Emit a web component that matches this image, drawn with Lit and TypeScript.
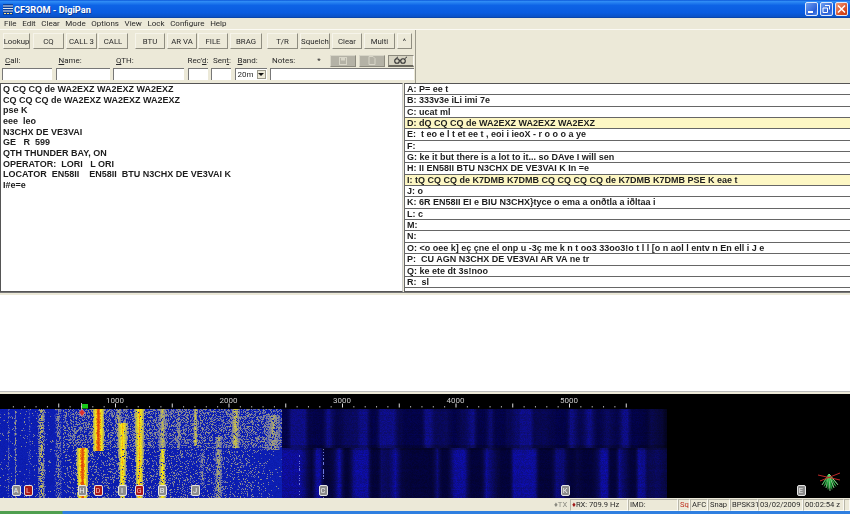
import { LitElement, html, css, svg } from "lit";
import { customElement } from "lit/decorators.js";

const rows: [string, boolean][] = [
  ["A: P= ee t", false],
  ["B: 333v3e iLi imi 7e", false],
  ["C: ucat ml", false],
  ["D: dQ CQ CQ de WA2EXZ WA2EXZ WA2EXZ", true],
  ["E:  t eo e l t et ee t , eoi i ieoX - r o o o a ye", false],
  ["F:", false],
  ["G: ke it but there is a lot to it... so DAve I will sen", false],
  ["H: II EN58II BTU N3CHX DE VE3VAI K In =e", false],
  ["I: tQ CQ CQ de K7DMB K7DMB CQ CQ CQ CQ de K7DMB K7DMB PSE K eae t", true],
  ["J: o", false],
  ["K: 6R EN58II EI e BIU N3CHX}tyce o ema a onðtla a iðltaa i", false],
  ["L: c", false],
  ["M:", false],
  ["N:", false],
  ["O: <o oee k] eç çne el onp u -3ç me k n t oo3 33oo3!o t l l [o n aol l entv n En ell i J e", false],
  ["P:  CU AGN N3CHX DE VE3VAI AR VA ne tr", false],
  ["Q: ke ete dt 3s!noo", false],
  ["R:  sl", false],
];

const leftLines = [
  "Q CQ CQ de WA2EXZ WA2EXZ WA2EXZ",
  "CQ CQ CQ de WA2EXZ WA2EXZ WA2EXZ",
  "pse K",
  "eee  leo",
  "N3CHX DE VE3VAI",
  "GE   R  599",
  "QTH THUNDER BAY, ON",
  "OPERATOR:  LORI   L ORI",
  "LOCATOR  EN58II    EN58II  BTU N3CHX DE VE3VAI K",
  "I#e=e",
];

const buttons: [string, number, number][] = [
  ["Lookup", 27, 3], ["CQ", 31, 3], ["CALL 3", 31, 2], ["CALL", 30, 1],
  ["BTU", 30, 7], ["AR VA", 30, 2], ["FILE", 30, 1], ["BRAG", 32, 2],
  ["T/R", 31, 5], ["Squelch", 30, 2], ["Clear", 30, 2], ["Multi", 31, 2], ["^", 15, 2],
];

const menus = ["File", "Edit", "Clear", "Mode", "Options", "View", "Lock", "Configure", "Help"];

const badges: [string, number, boolean][] = [
  ["A", 16, false], ["L", 28, true], ["H", 82, false], ["D", 98, true], ["I", 122, false],
  ["G", 139, true], ["B", 162, false], ["J", 195, false], ["C", 323, false], ["K", 565, false], ["E", 801, false],
];

const X = (f: number) => 1.5 + f * 0.1135;

function rng(seed: number) {
  return () => {
    seed |= 0; seed = (seed + 0x6d2b79f5) | 0;
    let t = Math.imul(seed ^ (seed >>> 15), 1 | seed);
    t = (t + Math.imul(t ^ (t >>> 7), 61 | t)) ^ t;
    return ((t ^ (t >>> 14)) >>> 0) / 4294967296;
  };
}

type Sig = { x: number; w: number; w1?: number; s: number; y0: number; y1: number; fill: number };
const signals: Sig[] = [
  { x: 41, w: 3.5, s: 0.72, y0: 0, y1: 89, fill: 0.7 },
  { x: 58, w: 3.5, s: 0.54, y0: 0, y1: 89, fill: 0.6 },
  { x: 98, w: 5.5, s: 1.18, y0: 0, y1: 41, fill: 1 },
  { x: 82, w: 6, w1: 5, s: 1.18, y0: 39, y1: 89, fill: 1 },
  { x: 122, w: 5.5, w1: 2.5, s: 1.0, y0: 14, y1: 89, fill: 0.95 },
  { x: 118, w: 3, s: 0.66, y0: 0, y1: 14, fill: 0.7 },
  { x: 139, w: 5, w1: 3.5, s: 1.02, y0: 0, y1: 89, fill: 0.97 },
  { x: 162, w: 4, s: 0.72, y0: 0, y1: 38, fill: 0.8 },
  { x: 162, w: 2.5, w1: 4, s: 0.95, y0: 40, y1: 89, fill: 0.9 },
  { x: 195, w: 2, s: 0.78, y0: 0, y1: 36, fill: 0.85 },
  { x: 235, w: 4, s: 0.78, y0: 0, y1: 38, fill: 0.85 },
  { x: 218, w: 3.5, s: 0.66, y0: 28, y1: 89, fill: 0.75 },
  { x: 273, w: 7, s: 0.66, y0: 6, y1: 40, fill: 0.7 },
  { x: 178, w: 2.5, s: 0.58, y0: 0, y1: 40, fill: 0.65 },
  { x: 202, w: 2.5, s: 0.54, y0: 40, y1: 75, fill: 0.5 },
  { x: 8, w: 0.6, s: 0.5, y0: 0, y1: 89, fill: 0.9 },
  { x: 15, w: 0.7, s: 0.62, y0: 0, y1: 89, fill: 0.95 },
  { x: 29, w: 0.8, s: 0.4, y0: 0, y1: 89, fill: 0.8 },
];

function colour(v: number): [number, number, number] {
  const stops: [number, number, number, number][] = [
    [0, 8, 20, 150], [0.25, 14, 34, 190], [0.42, 110, 115, 165], [0.58, 160, 158, 125],
    [0.75, 210, 200, 55], [0.92, 250, 235, 20], [1.02, 240, 130, 10], [1.2, 215, 50, 15],
  ];
  if (v <= stops[0][0]) return [stops[0][1], stops[0][2], stops[0][3]];
  for (let i = 1; i < stops.length; i++) {
    if (v <= stops[i][0]) {
      const a = stops[i - 1], b = stops[i], t = (v - a[0]) / (b[0] - a[0]);
      return [a[1] + (b[1] - a[1]) * t, a[2] + (b[2] - a[2]) * t, a[3] + (b[3] - a[3]) * t];
    }
  }
  const l = stops[stops.length - 1];
  return [l[1], l[2], l[3]];
}

function paint(c: HTMLCanvasElement) {
  const W = 850, H = 89, ctx = c.getContext("2d")!;
  const img = ctx.createImageData(W, H), r = rng(7);
  const smooth = (seed: number, period: number) => {
    const q = rng(seed), a: number[] = [];
    let k = 0;
    for (let x = 0; x < W; x++) {
      if (x % period === 0) k = q();
      a.push(k);
    }
    return a.map((_, i) => {
      let s = 0, n = 0;
      for (let j = -3; j <= 3; j++) { if (a[i + j] !== undefined) { s += a[i + j]; n++; } }
      return s / n;
    });
  };
  const stripeTop = smooth(11, 9), stripeBot = smooth(23, 7);
  const clamp = (v: number) => Math.max(0, Math.min(1, v));
  for (let y = 0; y < H; y++) {
    const top = y < 39;
    const rowGain = 0.92 + r() * 0.12;
    for (let x = 0; x < W; x++) {
      let R = 0, G = 0, B = 0;
      if (x < 282) {
        const edge = top ? 1 : clamp((285 - x) / 40);
        const dens = x > 62 ? (top ? 0.45 : 0.2 * edge) : 0.04;
        let v = 0.12 + r() * 0.1;
        if (r() < dens) v = 0.34 + r() * 0.22;
        for (const s of signals) {
          if (y < s.y0 || y > s.y1) continue;
          const t = (y - s.y0) / (s.y1 - s.y0);
          const w = s.w + ((s.w1 ?? s.w) - s.w) * t;
          const d = Math.abs(x + (r() - 0.5) * 1.4 - s.x) / w;
          if (d < 1 && r() < s.fill) {
            const e = s.s * (1 - d * 0.5);
            v = Math.max(v, e * (s.s > 0.9 ? 1 : 0.8 + r() * 0.3));
          }
        }
        [R, G, B] = colour(v);
      } else if (x < 667) {
        const st = clamp(((top ? stripeTop : stripeBot)[x] - 0.25) * 2);
        const fade = clamp((667 - x) / 30) * 0.6 + 0.4;
        const base = top ? 72 : 58;
        const amp = top ? 60 : 95;
        B = (base + amp * st * st) * (0.85 + r() * 0.3) * fade * rowGain;
        R = 3 + st * 10 * fade;
        G = 3 + st * 10 * fade;
        if (!top && (x === 323 || x === 299) && r() < 0.3) { R = 110; G = 120; B = 220; }
        if (y >= 36 && y <= 40) B *= 0.75;
      }
      const i = (y * W + x) * 4;
      img.data[i] = R; img.data[i + 1] = G; img.data[i + 2] = B; img.data[i + 3] = 255;
    }
  }
  ctx.putImageData(img, 0, 0);
}

@customElement("app-root")
export class AppRoot extends LitElement {
  static styles = css`
    :host { display: block; width: 850px; height: 514px; overflow: hidden; background: #ece9d8;
      font-family: Roboto, "Liberation Sans", Arial, sans-serif; font-size: 8px; color: #2a2a2a; }
    .app { display: flex; flex-direction: column; height: 514px; filter: blur(0.25px); }
    .title { height: 18px; flex: none; display: flex; align-items: center; padding: 0 2px 0 3px;
      box-sizing: border-box; color: #fff;
      background: linear-gradient(#0a55d8 0, #2f8cf5 8%, #0d63e6 30%, #0a5ce0 70%, #0a52c8 92%, #0a3f9c 100%); }
    .title svg.ico { margin-right: 1px; flex: none; }
    .title .name { flex: 1; font-family: Roboto, Arial, sans-serif; font-size: 9.200px; font-weight: 700; text-shadow: 1px 1px 0 #0a3f9c; }
    .wb { width: 13px; height: 14px; box-sizing: border-box; border: 1px solid #dfe9fb; border-radius: 2px;
      background: linear-gradient(135deg, #6f9ff2, #2a5fd6 70%, #4f86ec); margin-left: 1.500px; display: block; }
    .wb svg { display: block; }
    .wb.close { background: linear-gradient(135deg, #ee9a7a, #d6481f 70%, #c43a12); margin-left: 2.500px; }
    .menu { height: 12px; flex: none; display: flex; align-items: center; gap: 5.600px; padding-left: 4px; border-bottom: 1px solid #fbfaf4; box-sizing: border-box; }
    .tools { height: 23px; flex: none; display: flex; align-items: flex-start; padding-top: 3px; width: 416px; box-sizing: border-box;
      border-right: 1px solid #9c9a8c; }
    .btn { height: 16px; box-sizing: border-box; flex: none; display: flex; align-items: center; justify-content: center;
      background: #ece9d8; border: 1px solid; border-color: #f6f4ea #8f8d80 #8f8d80 #f6f4ea; white-space: nowrap; font-size: 7.800px; }
    .fields { height: 30px; flex: none; width: 416px; box-sizing: border-box; border-right: 1px solid #9c9a8c;
      display: grid; grid-template-columns: 50px 54px 71px 20px 20px 32px 144px; column-gap: 3.5px; padding: 0 0 0 2px; grid-template-rows: 15px 13px; align-items: center; }
    .fields .lb { padding-left: 3px; white-space: nowrap; }
    .fields .lb.a { padding-left: 0; }
    .fields .lb.b { padding-left: 2px; }
    .fields .notes { display: flex; align-items: center; padding-left: 2px; }
    .notes .nt { width: 46px; }
    .notes .star { width: 10px; }
    .ib { width: 26px; height: 12px; margin-left: 3px; flex: none; box-sizing: border-box; background: #b4b2a6; border: 1px solid; border-color: #d8d6c8 #8c8a7e #8c8a7e #d8d6c8; display: flex; align-items: center; justify-content: center; }
    .ib.on { background: #d6d3c2; border-color: #8c8a7e #fbfaf4 #6c6a60 #8c8a7e; border-bottom-width: 2px; }
    .in { height: 12px; align-self: start; background: #fff; box-sizing: border-box; border-top: 1px solid #777; border-left: 1px solid #777; }
    .sel { display: flex; align-items: center; justify-content: space-between; padding-left: 2px; }
    .sel i { width: 9px; height: 9px; margin-right: 1px; background: #ece9d8; border: 1px solid #9c9a8c; box-sizing: border-box; display: flex; align-items: center; justify-content: center; }
    .sel i::after { content: ""; border: 3px solid transparent; border-top: 3px solid #111; border-bottom: 0; }
    .panes { height: 209px; flex: none; display: flex; gap: 1px; font-family: "Liberation Sans", Arial, sans-serif; font-size: 9px; }
    .left { width: 403px; flex: none; box-sizing: border-box; background: #fff; border: 1px solid #555; border-right-color: #ccc; padding: 0 2px; font-weight: 700; line-height: 10.67px; color: #1c1c1c; white-space: pre; }
    .right { flex: 1; background: #fff; box-sizing: border-box; border-top: 1px solid #555; border-left: 1px solid #666; border-bottom: 1px solid #555; font-weight: 700; color: #1c1c1c; overflow: hidden; }
    .row { height: 11.35px; line-height: 10.8px; box-sizing: border-box; border-bottom: 1px solid #666; padding-left: 2px; white-space: pre; overflow: hidden; }
    .row.hi { background: #fdf7c4; }
    .sep { height: 3px; flex: none; background: #ece9d8; border-top: 1px solid #777; box-sizing: border-box; }
    .mid { height: 97px; flex: none; background: #fff; border-bottom: 1px solid #bbb; box-sizing: border-box; }
    .gap2 { height: 2px; flex: none; background: #ece9d8; }
    .wf { height: 104px; flex: none; position: relative; background: #000; }
    .ruler { display: block; width: 850px; height: 15px; }
    .ruler text { font-family: Roboto, "Liberation Sans", Arial, sans-serif; font-size: 8px; fill: #ccc; }
    canvas { display: block; width: 850px; height: 89px; filter: blur(0.5px); }
    .bd { position: absolute; top: 91px; width: 9px; height: 11px; box-sizing: border-box; margin-left: -4.500px; border: 1px solid #e4e4e4; border-radius: 2px;
      background: #8c8c8c; color: #f0f0f0; font-size: 7.500px; line-height: 9px; text-align: center; }
    .bd.red { background: #a81818; color: #f4c0c0; }
    .ov { position: absolute; left: 0; top: 0; pointer-events: none; }
    .status { height: 13px; flex: none; display: flex; align-items: center; box-sizing: border-box; padding-left: 552px; font-size: 7.600px; }
    .cell { height: 12px; box-sizing: border-box; display: flex; align-items: center; border: 1px solid; border-color: #b8b6a8 #fbfaf4 #fbfaf4 #b8b6a8; padding-left: 1px; flex: none; white-space: nowrap; }
    .cell.tx { border: none; color: #8a8a80; width: 18px; padding-left: 2px; }
    .cell.sq { color: #c03020; }
    .dn { color: #a01818; }
    .c58 { width: 58px; } .c50 { width: 50px; } .c12 { width: 12px; } .c18 { width: 18px; } .c22 { width: 22px; }
    .c28 { width: 28px; } .c45 { width: 45px; } .c41 { width: 41px; } .c6 { width: 6px; }
    .task { height: 3px; flex: none; background: linear-gradient(90deg, #4f9f4f 0, #4f9f4f 62px, #2f7fe0 63px, #2f7fe0 100%); }
  `;

  firstUpdated() {
    paint(this.renderRoot.querySelector("canvas") as HTMLCanvasElement);
  }

  private ruler() {
    const ticks = [];
    for (let f = 100; f <= 5500; f += 100) {
      const x = X(f);
      const long = f % 500 === 0;
      ticks.push(svg`<rect x=${x} y=${long ? 9.5 : 12} width="1" height=${long ? 4 : 1.5} fill=${long ? "#ddd" : "#aaa"}></rect>`);
    }
    return html`<svg class="ruler" viewBox="0 0 850 15">
      ${ticks}
      ${[1000, 2000, 3000, 4000, 5000].map((f) => svg`<text x=${X(f)} y="9" text-anchor="middle">${f}</text>`)}
      <path d="M81.500 9V15" stroke="#ddd" stroke-width="0.8"></path>
      <rect x="82" y="10" width="6" height="4.500" fill="#19c819"></rect>
    </svg>`;
  }

  private overlay() {
    const green = [];
    for (let i = 0; i < 17; i++) {
      const t = i / 16;
      green.push(svg`<line x1="829" y1="80" x2=${822 + t * 16} y2=${97 - Math.abs(t - 0.5) * 12 - (i % 2) * 2} stroke=${i % 4 === 0 ? "#a8eaa8" : "#2fc04a"} stroke-width="0.8"></line>`);
    }
    return html`<svg class="ov" width="850" height="104" viewBox="0 0 850 104">
      <path d="M82 15l3 3.500-3 4-3-4z" fill="#d83030" stroke="#f4b0b0" stroke-width="0.6"></path>
      ${green}
      <path d="M818 81L840 86M820 87L840 79" stroke="#c02828" stroke-width="1" fill="none"></path>
    </svg>`;
  }

  render() {
    return html`<div class="app">
      <div class="title">
        <svg class="ico" width="10" height="11" viewBox="0 0 10 11"><rect width="10" height="11" fill="#0a3f9c"></rect><path d="M0 2h10M0 4.500h10M0 7h10" stroke="#e6e6e6" stroke-width="1.200"></path><path d="M1 9.500h2M4 9.500h2M7 9.500h2" stroke="#ffe27a"></path></svg>
        <span class="name">CF3ROM - DigiPan</span>
        <span class="wb"><svg width="11" height="12" viewBox="0 0 11 12"><rect x="2" y="8" width="5" height="2" fill="#fff"></rect></svg></span>
        <span class="wb"><svg width="11" height="12" viewBox="0 0 11 12"><path d="M4 2.500h4.500v4M2 5h4.500v4.500h-4.500z" fill="none" stroke="#fff"></path></svg></span>
        <span class="wb close"><svg width="11" height="12" viewBox="0 0 11 12"><path d="M2 2.500l7 7M9 2.500l-7 7" stroke="#fff" stroke-width="1.500"></path></svg></span>
      </div>
      <div class="menu">${menus.map((m) => html`<span>${m}</span>`)}</div>
      <div class="tools">
        ${buttons.map(([t, w, m]) => html`<div class="btn" style="width:${w}px;margin-left:${m}px">${t}</div>`)}
      </div>
      <div class="fields">
        <span class="lb"><u>C</u>all:</span><span class="lb"><u>N</u>ame:</span><span class="lb"><u>Q</u>TH:</span>
        <span class="lb a">Rec'<u>d</u>:</span><span class="lb b">Sen<u>t</u>:</span><span class="lb"><u>B</u>and:</span>
        <span class="lb notes"><span class="nt">Notes:</span><span class="star">*</span>
          <span class="ib"><svg width="10" height="8" viewBox="0 0 10 8"><rect x="1.500" y="0.500" width="7" height="7" fill="none" stroke="#d8d6c8"></rect><rect x="3" y="1" width="4" height="2.500" fill="#d8d6c8"></rect></svg></span>
          <span class="ib"><svg width="8" height="9" viewBox="0 0 8 9"><path d="M1 .5h4l2 2v6H1z" fill="none" stroke="#d8d6c8"></path></svg></span>
          <span class="ib on"><svg width="16" height="8" viewBox="0 0 16 8"><circle cx="4" cy="5" r="2.300" fill="none" stroke="#333" stroke-width="1.100"></circle><circle cx="10" cy="5" r="2.300" fill="none" stroke="#333" stroke-width="1.100"></circle><path d="M6.300 4.500h1.400M2.500 3L5 .8M11.500 3L14 .8" stroke="#333" fill="none"></path></svg></span>
        </span>
        <div class="in"></div><div class="in"></div><div class="in"></div><div class="in"></div><div class="in"></div>
        <div class="in sel"><span>20m</span><i></i></div><div class="in"></div>
      </div>
      <div class="panes">
        <div class="left">${leftLines.map((l) => html`<div>${l}</div>`)}</div>
        <div class="right">${rows.map(([t, h]) => html`<div class="row ${h ? "hi" : ""}">${t}</div>`)}</div>
      </div>
      <div class="sep"></div>
      <div class="mid"></div>
      <div class="gap2"></div>
      <div class="wf">
        ${this.ruler()}
        <canvas width="850" height="89"></canvas>
        ${this.overlay()}
        ${badges.map(([t, x, red]) => html`<span class="bd ${red ? "red" : ""}" style="left:${x}px">${t}</span>`)}
      </div>
      <div class="status">
        <span class="cell tx">♦TX</span>
        <span class="cell c58"><span class="dn">♦</span>RX: 709.9 Hz</span>
        <span class="cell c50">IMD:</span>
        <span class="cell sq c12">Sq</span>
        <span class="cell c18">AFC</span>
        <span class="cell c22">Snap</span>
        <span class="cell c28">BPSK31</span>
        <span class="cell c45">03/02/2009</span>
        <span class="cell c41">00:02:54 z</span>
        <span class="cell c6"></span>
      </div>
      <div class="task"></div>
    </div>`;
  }
}
